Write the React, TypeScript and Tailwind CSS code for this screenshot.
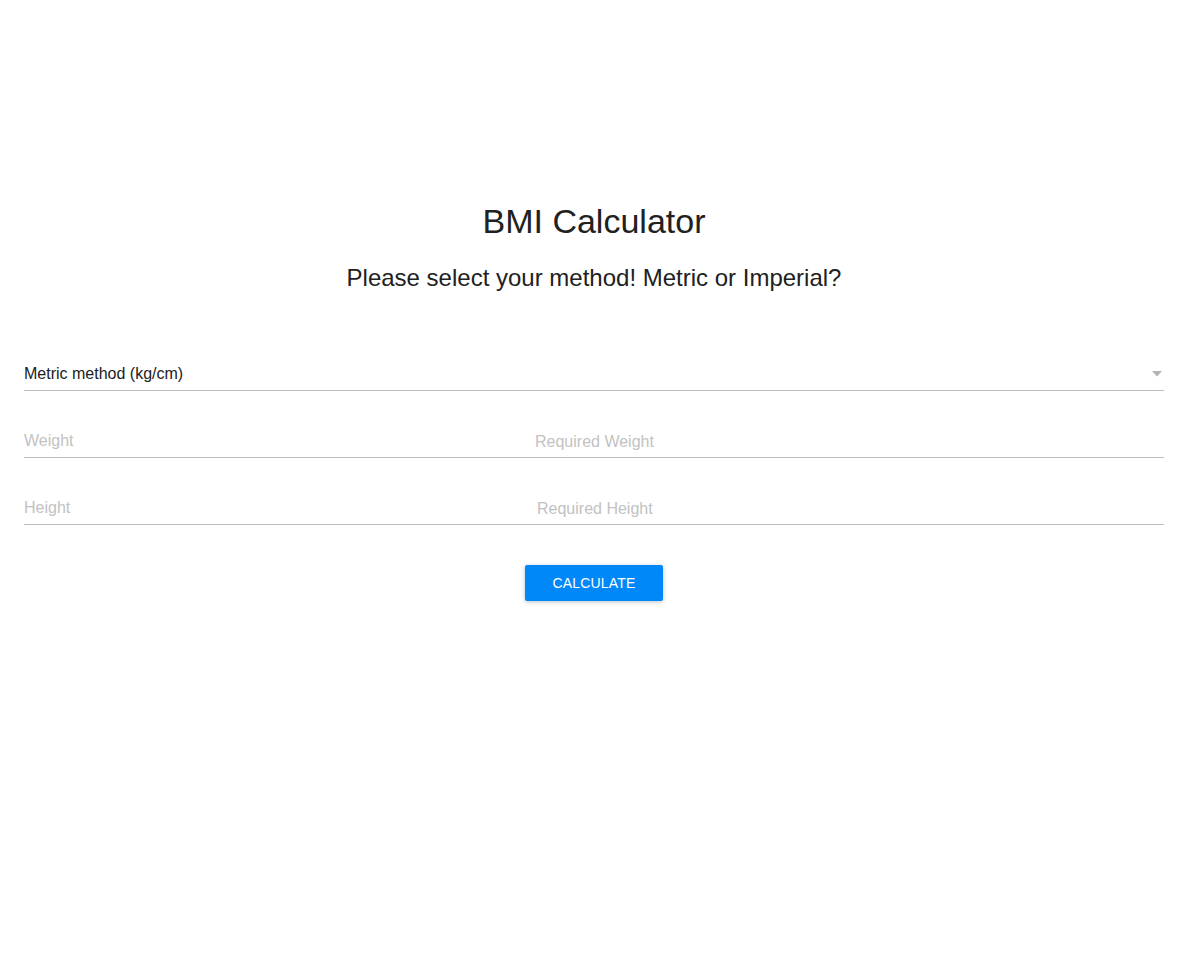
import React from "react";

export default function App() {
    return (
        <div className="min-h-[958px] bg-white font-['Liberation_Sans',Arial,sans-serif] text-[#212121]">
            <div className="ml-[24px] w-[1140px] pt-[201px]">
                <h1 className="text-center text-[34px] leading-[40px]">BMI Calculator</h1>
                <h2 className="mt-[23px] text-center text-[24px] leading-[28px]">Please select your method! Metric or Imperial?</h2>

                {/* Method select */}
                <div className="mt-[69px] flex items-center justify-between border-b border-[#bdbdbd] pt-[1px] pb-[4px]">
                    <span className="text-[16px] leading-[24px]">Metric method (kg/cm)</span>
                    <svg width="10" height="6" viewBox="0 0 10 6" className="mr-[2px]">
                        <path d="M0 0 L10 0 L5 5.5 Z" fill="#b3b3b3" />
                    </svg>
                </div>

                {[
                    { label: "Weight", hint: "Required Weight", mt: "mt-[36px]", hintMl: "w-[511px]" },
                    { label: "Height", hint: "Required Height", mt: "mt-[36px]", hintMl: "w-[513px]" },
                ].map(f => (
                    <div key={f.label} className={`${f.mt} flex border-b border-[#bdbdbd] pt-[2px] pb-[3px] text-[16px] leading-[24px] text-[#c2c2c2]`}>
                        <span className={f.hintMl}>{f.label}</span>
                        <span className="mt-[1px]">{f.hint}</span>
                    </div>
                ))}

                <div className="mt-[40px] flex justify-center">
                    <button className="h-[36px] w-[138px] rounded-[2px] bg-[#0088f8] text-[14px] tracking-[0.2px] text-white shadow-[0_1px_4px_rgba(0,0,0,0.25)]">
                        CALCULATE
                    </button>
                </div>
            </div>
        </div>
    );
}
